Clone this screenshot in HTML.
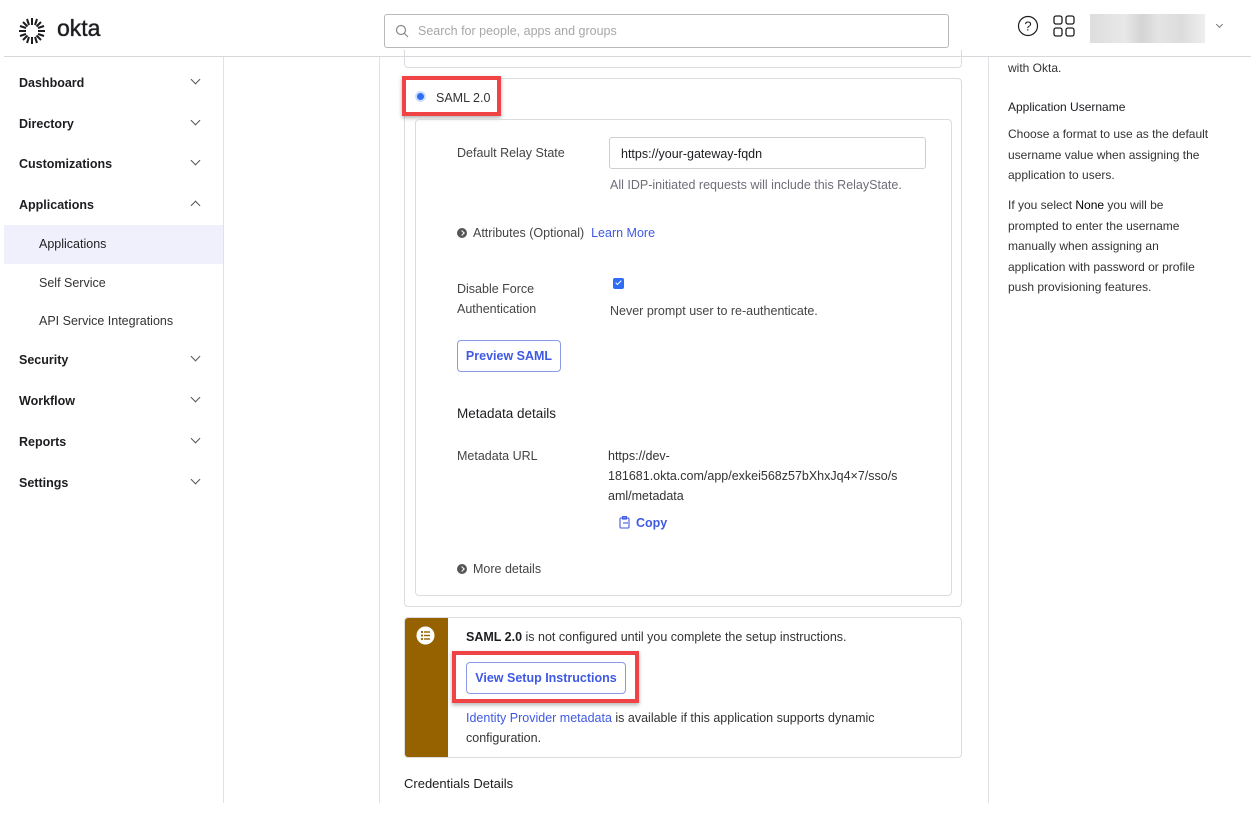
<!DOCTYPE html>
<html><head><meta charset="utf-8"><style>
*{box-sizing:border-box;margin:0;padding:0}
body{width:1256px;height:815px;background:#fff;font-family:"Liberation Sans",sans-serif;color:#1d1d21;position:relative;overflow:hidden;font-size:12.5px}
.a{position:absolute;white-space:nowrap}
.nav{position:absolute;left:19px;font-weight:bold;font-size:12.5px;color:#1d1d21}
.chev{position:absolute;left:192px;width:7px;height:7px;border-right:1.3px solid #555;border-bottom:1.3px solid #555;transform:rotate(45deg)}
.sub{position:absolute;left:39px;font-size:12.5px;color:#333}
.g{color:#444}
.blue{color:#3f59e4}
.btn{position:absolute;border:1px solid #8a9ae8;border-radius:4px;color:#3f59e4;font-weight:bold;font-size:12.5px;text-align:center}
.red{position:absolute;border:4px solid #f04346;box-shadow:0 2px 4px rgba(0,0,0,.3)}
.dot{display:inline-block;width:10px;height:10px;border-radius:50%;background:#555;vertical-align:-1px;margin-right:6px;position:relative}
.dot:after{content:"";position:absolute;left:3px;top:3px;width:3px;height:3px;border-right:1px solid #fff;border-top:1px solid #fff;transform:rotate(45deg)}
.rp{position:absolute;left:1008px;font-size:12px;color:#333;line-height:20.5px}
</style></head><body>
<svg class="a" style="left:18px;top:17px" width="28" height="28" viewBox="0 0 28 28"><g stroke="#1d1d21" stroke-width="2"><line x1="14" y1="1" x2="14" y2="8"/><line x1="14" y1="20" x2="14" y2="27"/><line x1="1" y1="14" x2="8" y2="14"/><line x1="20" y1="14" x2="27" y2="14"/><line x1="5" y1="5" x2="9.5" y2="9.5"/><line x1="18.5" y1="18.5" x2="23" y2="23"/><line x1="23" y1="5" x2="18.5" y2="9.5"/><line x1="9.5" y1="18.5" x2="5" y2="23"/><line x1="9" y1="2" x2="11" y2="8"/><line x1="19" y1="2" x2="17" y2="8"/><line x1="9" y1="26" x2="11" y2="20"/><line x1="19" y1="26" x2="17" y2="20"/><line x1="2" y1="9" x2="8" y2="11"/><line x1="2" y1="19" x2="8" y2="17"/><line x1="26" y1="9" x2="20" y2="11"/><line x1="26" y1="19" x2="20" y2="17"/></g></svg>
<div class="a" style="left:57px;top:15px;font-size:23px;color:#1d1d21;text-shadow:0 0 .6px #1d1d21,0 0 .6px #1d1d21">okta</div>
<div class="a" style="left:384px;top:14px;width:565px;height:34px;border:1px solid #b9b9bd;border-radius:3px"></div>
<svg class="a" style="left:395px;top:24px" width="14" height="14" viewBox="0 0 14 14"><circle cx="6" cy="6" r="4.5" stroke="#888" fill="none" stroke-width="1.2"/><line x1="9.3" y1="9.3" x2="13" y2="13" stroke="#888" stroke-width="1.2"/></svg>
<div class="a" style="left:418px;top:24px;font-size:12.5px;color:#a7a7ab">Search for people, apps and groups</div>
<svg class="a" style="left:1017px;top:15px" width="22" height="22" viewBox="0 0 22 22"><circle cx="11" cy="11" r="9.5" stroke="#1d1d21" fill="none" stroke-width="1.2"/><text x="11" y="15.5" text-anchor="middle" font-size="13" font-family="Liberation Sans" fill="#1d1d21">?</text></svg>
<svg class="a" style="left:1053px;top:15px" width="22" height="22" viewBox="0 0 22 22"><g stroke="#1d1d21" fill="none" stroke-width="1.3"><rect x="1" y="1" width="8" height="8" rx="2"/><rect x="13" y="1" width="8" height="8" rx="2"/><rect x="1" y="13" width="8" height="8" rx="2"/><rect x="13" y="13" width="8" height="8" rx="2"/></g></svg>
<div class="a" style="left:1090px;top:14px;width:115px;height:29px;background:linear-gradient(90deg,#ddd,#e8e8e8 30%,#d4d4d4 45%,#e4e4e4 60%,#dcdcdc 80%,#eee)"></div>
<div class="a" style="left:1217px;top:22px;width:5px;height:5px;border-right:1px solid #777;border-bottom:1px solid #777;transform:rotate(45deg)"></div>
<div class="a" style="left:4px;top:56px;width:1247px;height:1px;background:#d8d8dc"></div>
<div class="a" style="left:223px;top:57px;width:1px;height:746px;background:#e2e2e6"></div>
<div class="nav" style="top:76px">Dashboard</div><div class="chev" style="top:76px"></div>
<div class="nav" style="top:117px">Directory</div><div class="chev" style="top:117px"></div>
<div class="nav" style="top:157px">Customizations</div><div class="chev" style="top:157px"></div>
<div class="nav" style="top:198px">Applications</div><div class="chev" style="top:202px;transform:rotate(225deg)"></div>
<div class="a" style="left:4px;top:225px;width:219px;height:39px;background:#eff0fb"></div>
<div class="sub" style="top:237px;color:#1d1d21">Applications</div>
<div class="sub" style="top:276px">Self Service</div>
<div class="sub" style="top:314px">API Service Integrations</div>
<div class="nav" style="top:353px">Security</div><div class="chev" style="top:353px"></div>
<div class="nav" style="top:394px">Workflow</div><div class="chev" style="top:394px"></div>
<div class="nav" style="top:435px">Reports</div><div class="chev" style="top:435px"></div>
<div class="nav" style="top:476px">Settings</div><div class="chev" style="top:476px"></div>
<div class="a" style="left:379px;top:57px;width:1px;height:746px;background:#e2e2e6"></div>
<div class="a" style="left:988px;top:57px;width:1px;height:746px;background:#e2e2e6"></div>
<div class="a" style="left:404px;top:50px;width:558px;height:18px;border:1px solid #dcdce0;border-top:none;border-radius:0 0 4px 4px"></div>
<div class="a" style="left:404px;top:78px;width:558px;height:529px;border:1px solid #dcdce0;border-radius:4px"></div>
<div class="red" style="left:402px;top:76px;width:99px;height:40px"></div>
<div class="a" style="left:415px;top:91px;width:11px;height:11px;border-radius:50%;background:#2f6df6;border:2.5px solid #cfe0ff"></div>
<div class="a" style="left:436px;top:91px;font-size:12.5px;color:#333">SAML 2.0</div>
<div class="a" style="left:415px;top:119px;width:537px;height:477px;border:1px solid #dcdce0;border-radius:4px"></div>
<div class="a g" style="left:457px;top:146px">Default Relay State</div>
<div class="a" style="left:609px;top:137px;width:317px;height:32px;border:1px solid #cfcfd3;border-radius:3px;padding:9px 11px;color:#1d1d21">https://your-gateway-fqdn</div>
<div class="a g" style="left:610px;top:178px;color:#6e6e78">All IDP-initiated requests will include this RelayState.</div>
<div class="a g" style="left:457px;top:226px"><span class="dot"></span>Attributes (Optional) &nbsp;<span class="blue">Learn More</span></div>
<div class="a g" style="left:457px;top:279px;line-height:20px">Disable Force<br>Authentication</div>
<div class="a" style="left:613px;top:278px;width:11px;height:11px;background:#2f6df6;border-radius:2px"><div style="position:absolute;left:3.5px;top:1px;width:3px;height:6px;border-right:1.5px solid #fff;border-bottom:1.5px solid #fff;transform:rotate(45deg)"></div></div>
<div class="a g" style="left:610px;top:304px">Never prompt user to re-authenticate.</div>
<div class="btn" style="left:457px;top:340px;width:104px;height:32px;line-height:30px">Preview SAML</div>
<div class="a" style="left:457px;top:406px;font-size:13.5px;color:#1d1d21">Metadata details</div>
<div class="a g" style="left:457px;top:449px">Metadata URL</div>
<div class="a" style="left:608px;top:446px;line-height:20px;color:#333">https://dev-<br>181681.okta.com/app/exkei568z57bXhxJq4×7/sso/s<br>aml/metadata</div>
<svg class="a" style="left:619px;top:516px" width="12" height="13" viewBox="0 0 12 13"><g stroke="#3f59e4" fill="none" stroke-width="1.1"><rect x="1" y="2" width="9" height="10" rx="1"/><rect x="3.5" y="0.6" width="4" height="2.4"/><line x1="4" y1="7" x2="9" y2="7"/></g></svg>
<div class="a blue" style="left:636px;top:516px;font-weight:bold">Copy</div>
<div class="a g" style="left:457px;top:562px"><span class="dot"></span>More details</div>
<div class="a" style="left:404px;top:617px;width:558px;height:141px;border:1px solid #dcdce0;border-radius:4px;overflow:hidden"><div style="position:absolute;left:0;top:0;width:43px;height:141px;background:#966200"></div></div>
<svg class="a" style="left:416px;top:626px" width="19" height="19" viewBox="0 0 19 19"><circle cx="9.5" cy="9.5" r="9" fill="#fff"/><g fill="#966200"><circle cx="6" cy="6" r="1.1"/><circle cx="6" cy="9.5" r="1.1"/><circle cx="6" cy="13" r="1.1"/><rect x="8" y="5.3" width="6" height="1.4"/><rect x="8" y="8.8" width="6" height="1.4"/><rect x="8" y="12.3" width="6" height="1.4"/></g></svg>
<div class="a" style="left:466px;top:630px;color:#333"><b style="color:#1d1d21">SAML 2.0</b> is not configured until you complete the setup instructions.</div>
<div class="red" style="left:452px;top:651px;width:187px;height:52px"></div>
<div class="btn" style="left:466px;top:662px;width:160px;height:32px;line-height:30px;background:#fff">View Setup Instructions</div>
<div class="a" style="left:466px;top:708px;line-height:20px;color:#333"><span class="blue">Identity Provider metadata</span> is available if this application supports dynamic<br>configuration.</div>
<div class="a" style="left:404px;top:776px;font-size:13px;color:#1d1d21">Credentials Details</div>
<div class="rp" style="top:58px">with Okta.</div>
<div class="rp" style="top:97px;color:#1d1d21">Application Username</div>
<div class="rp" style="top:124px">Choose a format to use as the default<br>username value when assigning the<br>application to users.</div>
<div class="rp" style="top:195px">If you select <span style="color:#000">None</span> you will be<br>prompted to enter the username<br>manually when assigning an<br>application with password or profile<br>push provisioning features.</div>
</body></html>
